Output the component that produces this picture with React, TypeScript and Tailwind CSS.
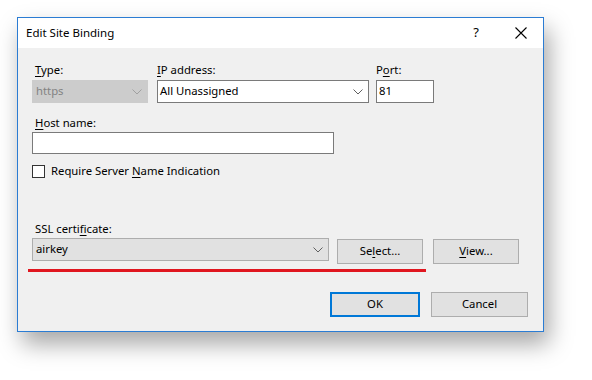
import React from 'react';

const Chevron = ({ color = '#606060' }: { color?: string }) => (
  <svg width="10" height="6" viewBox="0 0 10 6" className="shrink-0">
    <path d="M0.5 0.5 L5 5 L9.5 0.5" fill="none" stroke={color} strokeWidth="1" />
  </svg>
);

const Key = ({ children }: { children: React.ReactNode }) => (
  <span className="underline underline-offset-2 decoration-1">{children}</span>
);

export default function App() {
  return (
    <div className="w-[592px] h-[380px] bg-white overflow-hidden font-['Noto_Sans',sans-serif] text-[11.3px] text-black">
      <div className="ml-[17px] mt-[17px] w-[527px] h-[315px] border border-[#2b7cd3] bg-[#f0f0f0] flex flex-col shadow-[5px_12px_22px_rgba(0,0,0,0.35)]">
        {/* title bar */}
        <div className="h-[30px] bg-white flex items-center pl-[8px] pr-[16px] shrink-0">
          <span className="flex-1 text-[11.5px]">Edit Site Binding</span>
          <span className="mr-[36px] text-[13px]">?</span>
          <svg width="12" height="12" viewBox="0 0 12 12">
            <path d="M0.5 0.5 L11.5 11.5 M11.5 0.5 L0.5 11.5" stroke="#000" strokeWidth="1.1" />
          </svg>
        </div>

        <div className="flex flex-col pl-[14px] pt-[14px]">
          {/* row 1 */}
          <div className="flex items-start">
            <div className="flex flex-col w-[116px]">
              <span className="h-[18px] pl-[3px]"><Key>T</Key>ype:</span>
              <div className="h-[23px] bg-[#cccccc] border border-[#cccccc] flex items-center pl-[3px] pr-[5px]">
                <span className="flex-1 text-[#838383]">https</span>
                <Chevron color="#a0a0a0" />
              </div>
            </div>
            <div className="flex flex-col w-[212px] ml-[9px]">
              <span className="h-[18px]"><Key>I</Key>P address:</span>
              <div className="h-[23px] bg-white border border-[#7a7a7a] flex items-center pl-[2px] pr-[5px]">
                <span className="flex-1">All Unassigned</span>
                <Chevron />
              </div>
            </div>
            <div className="flex flex-col w-[58px] ml-[7px]">
              <span className="h-[18px]">P<Key>o</Key>rt:</span>
              <div className="h-[23px] bg-white border border-[#7a7a7a] flex items-center pl-[2px]">81</div>
            </div>
          </div>

          {/* host name */}
          <span className="mt-[12px] h-[17px] pl-[3px]"><Key>H</Key>ost name:</span>
          <div className="w-[302px] h-[22px] bg-white border border-[#7a7a7a]" />

          <div className="flex items-center mt-[11px] h-[13px]">
            <div className="w-[13px] h-[13px] bg-white border border-[#333333]" />
            <span className="ml-[6px]">Require Server <Key>N</Key>ame Indication</span>
          </div>

          {/* ssl */}
          <span className="mt-[43px] h-[17px] pl-[3px]">SSL certi<Key>f</Key>icate:</span>
          <div className="flex items-start">
            <div className="w-[297px] h-[23px] bg-[#e1e1e1] border border-[#adadad] flex items-center pl-[3px] pr-[5px]">
              <span className="flex-1">airkey</span>
              <Chevron />
            </div>
            <button className="ml-[8px] mt-[1px] w-[86px] h-[25px] bg-[#e1e1e1] border border-[#adadad]">Se<Key>l</Key>ect...</button>
            <button className="ml-[10px] mt-[1px] w-[86px] h-[25px] bg-[#e1e1e1] border border-[#adadad]"><Key>V</Key>iew...</button>
          </div>
          <div className="mt-[5px] -ml-[4px] w-[398px] h-[3px] bg-[#e0161f]" />

          {/* footer */}
          <div className="flex justify-end mt-[20px] pr-[15px]">
            <button className="w-[90px] h-[25px] bg-[#e1e1e1] border-2 border-[#0078d7]">OK</button>
            <button className="ml-[11px] w-[97px] h-[25px] bg-[#e1e1e1] border border-[#adadad]">Cancel</button>
          </div>
        </div>
      </div>
    </div>
  );
}
